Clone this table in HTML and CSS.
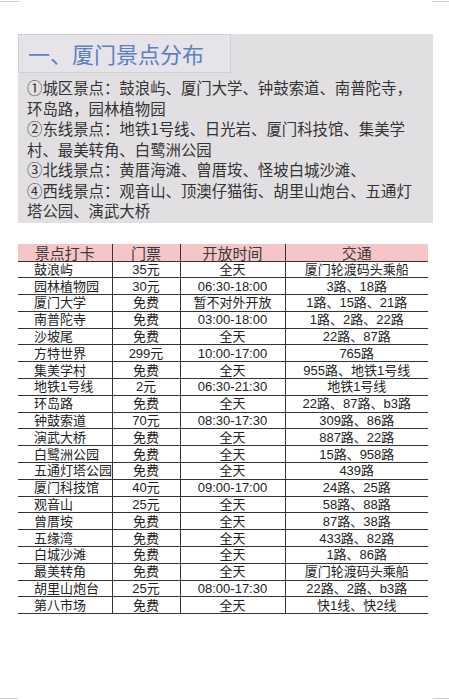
FILE: index.html
```html
<!DOCTYPE html>
<html lang="zh-CN">
<head>
<meta charset="utf-8">
<link rel="stylesheet" href="styles.css">
</head>
<body>
<div class="mark mark-tl"></div>
<div class="mark mark-tr"></div>
<div class="mark mark-bl"></div>
<div class="mark mark-br"></div>
<main class="page">
  <section class="intro">
    <h1 class="title-box">一、厦门景点分布</h1>
    <p class="intro-text">①城区景点：鼓浪屿、厦门大学、钟鼓索道、南普陀寺，<br>环岛路，园林植物园<br>②东线景点：地铁1号线、日光岩、厦门科技馆、集美学<br>村、最美转角、白鹭洲公园<br>③北线景点：黄厝海滩、曾厝垵、怪坡白城沙滩、<br>④西线景点：观音山、顶澳仔猫街、胡里山炮台、五通灯<br>塔公园、演武大桥</p>
  </section>
  <table class="spots">
    <colgroup>
      <col class="c1"><col class="c2"><col class="c3"><col class="c4">
    </colgroup>
    <thead>
      <tr><th>景点打卡</th><th>门票</th><th>开放时间</th><th>交通</th></tr>
    </thead>
    <tbody>
      <tr><td>鼓浪屿</td><td>35元</td><td>全天</td><td>厦门轮渡码头乘船</td></tr>
      <tr><td>园林植物园</td><td>30元</td><td>06:30-18:00</td><td>3路、18路</td></tr>
      <tr><td>厦门大学</td><td>免费</td><td>暂不对外开放</td><td>1路、15路、21路</td></tr>
      <tr><td>南普陀寺</td><td>免费</td><td>03:00-18:00</td><td>1路、2路、22路</td></tr>
      <tr><td>沙坡尾</td><td>免费</td><td>全天</td><td>22路、87路</td></tr>
      <tr><td>方特世界</td><td>299元</td><td>10:00-17:00</td><td>765路</td></tr>
      <tr><td>集美学村</td><td>免费</td><td>全天</td><td>955路、地铁1号线</td></tr>
      <tr><td>地铁1号线</td><td>2元</td><td>06:30-21:30</td><td>地铁1号线</td></tr>
      <tr><td>环岛路</td><td>免费</td><td>全天</td><td>22路、87路、b3路</td></tr>
      <tr><td>钟鼓索道</td><td>70元</td><td>08:30-17:30</td><td>309路、86路</td></tr>
      <tr><td>演武大桥</td><td>免费</td><td>全天</td><td>887路、22路</td></tr>
      <tr><td>白鹭洲公园</td><td>免费</td><td>全天</td><td>15路、958路</td></tr>
      <tr><td>五通灯塔公园</td><td>免费</td><td>全天</td><td>439路</td></tr>
      <tr><td>厦门科技馆</td><td>40元</td><td>09:00-17:00</td><td>24路、25路</td></tr>
      <tr><td>观音山</td><td>25元</td><td>全天</td><td>58路、88路</td></tr>
      <tr><td>曾厝垵</td><td>免费</td><td>全天</td><td>87路、38路</td></tr>
      <tr><td>五缘湾</td><td>免费</td><td>全天</td><td>433路、82路</td></tr>
      <tr><td>白城沙滩</td><td>免费</td><td>全天</td><td>1路、86路</td></tr>
      <tr><td>最美转角</td><td>免费</td><td>全天</td><td>厦门轮渡码头乘船</td></tr>
      <tr><td>胡里山炮台</td><td>25元</td><td>08:00-17:30</td><td>22路、2路、b3路</td></tr>
      <tr><td>第八市场</td><td>免费</td><td>全天</td><td>快1线、快2线</td></tr>
    </tbody>
  </table>
</main>
</body>
</html>
```

FILE: styles.css
```css
html, body {
  margin: 0;
  padding: 0;
  background: #ffffff;
}

body {
  font-family: "Liberation Sans", "Noto Sans CJK SC", sans-serif;
  color: #222;
}

.mark {
  position: absolute;
  height: 1px;
  background: #cfcfcf;
}
.mark-tl { left: 0; top: 1px; width: 20px; }
.mark-tr { right: 0; top: 1px; width: 17px; }
.mark-bl { left: 0; top: 698px; width: 18px; }
.mark-br { right: 0; top: 698px; width: 16px; }

.page {
  padding: 34px 16px 0 18px;
}

.intro {
  width: 415px;
  background: #e2dfe3;
}

.title-box {
  margin: 0;
  width: 213px;
  height: 39px;
  box-sizing: border-box;
  border: 1px solid #d2cfd4;
  background: #e6e4e8;
  padding-left: 9px;
  font-family: "Noto Sans CJK SC", sans-serif;
  font-weight: 400;
  font-size: 22px;
  line-height: 37px;
  color: #5b80c4;
  white-space: nowrap;
}

.intro-text {
  margin: 0;
  padding: 4px 0 2px 9px;
  font-family: "Noto Sans CJK SC", sans-serif;
  font-size: 15.4px;
  line-height: 20.5px;
  color: #333;
  white-space: nowrap;
}

.spots {
  margin-top: 21px;
  width: 410px;
  table-layout: fixed;
  border-collapse: collapse;
  font-size: 13px;
}

.c1 { width: 94px; }
.c2 { width: 68px; }
.c3 { width: 105px; }
.c4 { width: 143px; }

.spots th {
  height: 17px;
  padding: 0;
  background: #f5c5c8;
  font-family: "Noto Sans CJK SC", sans-serif;
  font-weight: 400;
  font-size: 15px;
  line-height: 17px;
  color: #3a3a3a;
  text-align: center;
  border-bottom: 1.5px solid #333;
}

.spots td {
  height: 15.8px;
  padding: 0;
  line-height: 15px;
  text-align: center;
  white-space: nowrap;
  border-bottom: 1.5px solid #333;
  color: #222;
}

.spots th + th,
.spots td + td {
  border-left: 1.5px solid #333;
}

.spots td:first-child {
  text-align: left;
  padding-left: 16px;
}
```
